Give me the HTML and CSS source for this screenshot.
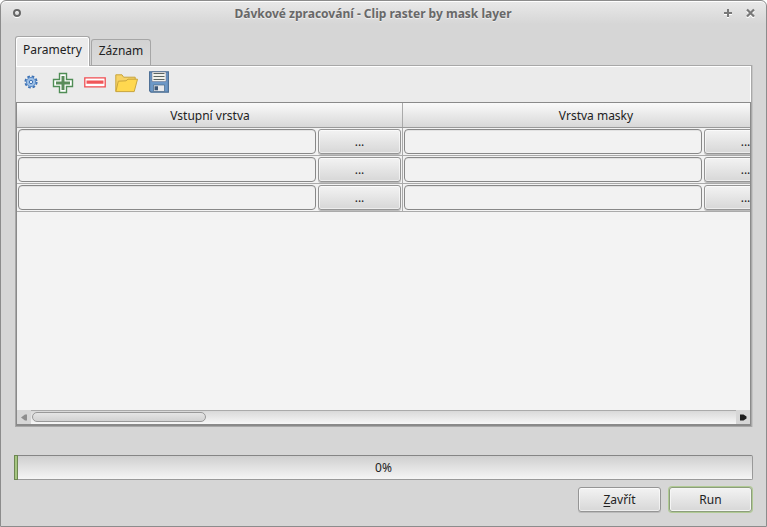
FILE: index.html
```html
<!DOCTYPE html>
<html lang="cs">
<head>
<meta charset="utf-8">
<title>Dávkové zpracování</title>
<link rel="stylesheet" href="styles.css">
</head>
<body>
<main class="window">
  <header class="titlebar">
    <svg class="win-icon" width="10" height="10" viewBox="0 0 10 10"><circle cx="5" cy="6" r="3" fill="none" stroke="#fff" stroke-width="2"/><circle cx="5" cy="5" r="3" fill="none" stroke="#666" stroke-width="2"/></svg>
    <h1 class="title">Dávkové zpracování - Clip raster by mask layer</h1>
    <div class="controls">
      <svg width="8" height="10" viewBox="0 0 8 10"><path d="M0 6h8M4 2v8" stroke="#fff" stroke-width="2"/><path d="M0 5h8M4 1v8" stroke="#787878" stroke-width="2"/></svg>
      <svg width="9" height="10" viewBox="0 0 9 10"><path d="M1 3l7 7M8 3l-7 7" stroke="#fff" stroke-width="2"/><path d="M1 1.5l7 7M8 1.5l-7 7" stroke="#787878" stroke-width="2.2"/></svg>
    </div>
  </header>

  <nav class="tabs">
    <div class="tab tab-active">Parametry</div>
    <div class="tab">Záznam</div>
  </nav>

  <section class="panel">
    <div class="toolbar">
      <svg class="gear" width="14" height="14" viewBox="0 0 14 14"><circle cx="7" cy="7" r="5.6" fill="none" stroke="#3f73b5" stroke-width="2" stroke-dasharray="2.6 1.8"/><circle cx="7" cy="7" r="4.6" fill="#9dbfe5" stroke="#5c8dc8"/><circle cx="7" cy="7" r="1.7" fill="#e4edf7" stroke="#3f73b5"/></svg>
      <svg class="plus" width="22" height="22" viewBox="0 0 22 22"><path d="M7.5 1.5h7v6h6v7h-6v6h-7v-6h-6v-7h6z" fill="#fff" stroke="#4f8d55" stroke-width="1.4"/><path d="M11 4v14M4 11h14" stroke="#5a8c5a" stroke-width="3"/></svg>
      <svg class="minus" width="22" height="11" viewBox="0 0 22 11"><path d="M.8.8h20.4v9H.8z" fill="#fff" stroke="#ef4c50" stroke-width="1.3"/><path d="M2.5 3.5h17v3.2h-17z" fill="#f05659"/></svg>
      <svg class="folder" width="23" height="19" viewBox="0 0 23 19"><path d="M.8 17.5V.8h6.2l1.6 2.4h11.6v4" fill="#f7d366" stroke="#c9a53c"/><path d="M.9 17.6L3.3 7.2l7.7-.4 2-1.6h9.5L19.2 17.6z" fill="#ffd84f" stroke="#c9a53c"/></svg>
      <svg class="floppy" width="20" height="22" viewBox="0 0 20 22"><path d="M.6.8h18.8v20.4H2L.6 19.7z" fill="#6d98c7" stroke="#4f7197" stroke-width="1.2"/><path d="M3 1h14v9.5H3z" fill="#f1f1ec" stroke="#557" stroke-width=".4"/><path d="M4.5 2.5h11M4.5 5.5h11M4.5 8.5h11" stroke="#5c6461"/><path d="M4.5 14h11v6.5h-11z" fill="#e9eaed" stroke="#496987" stroke-width=".7"/><path d="M5.5 15.2H9v4H5.5z" fill="#3b5677"/></svg>
    </div>
    <div class="grid">
      <div class="row head"><div class="cell">Vstupní vrstva</div><div class="cell">Vrstva masky</div></div>
      <div class="row"><div class="cell"><span class="input"></span><span class="button">...</span></div><div class="cell"><span class="input"></span><span class="button">...</span></div></div>
      <div class="row"><div class="cell"><span class="input"></span><span class="button">...</span></div><div class="cell"><span class="input"></span><span class="button">...</span></div></div>
      <div class="row"><div class="cell"><span class="input"></span><span class="button">...</span></div><div class="cell"><span class="input"></span><span class="button">...</span></div></div>
      <div class="scrollbar">
        <span class="arrow"><svg width="7" height="7" viewBox="0 0 7 7"><path d="M0 3.5L4 .5h2v6H4z" fill="#8e8e8e"/></svg></span>
        <span class="track"><span class="thumb"></span></span>
        <span class="arrow"><svg width="7" height="7" viewBox="0 0 7 7"><path d="M0 .5h3.5l3 2v2l-3 2H0z" fill="#1e1e1e"/></svg></span>
      </div>
    </div>
  </section>

  <div class="progress"><span class="chunk"></span>0%</div>
  <footer class="actions">
    <div class="button"><span class="key">Z</span>avřít</div>
    <div class="button default">Run</div>
  </footer>
</main>
</body>
</html>
```
FILE: styles.css
```css
* { box-sizing: border-box; }
body {
  margin: 0;
  background: #fff;
  font: 12px/16px "Noto Sans", "Open Sans", sans-serif;
  color: #222;
}
svg { display: block; flex: none; }
.window {
  width: 767px;
  height: 527px;
  border: 1px solid #8c8c8c;
  border-radius: 6px 6px 0 0;
  background: linear-gradient(#e9e9e9, #d6d6d6 23px);
  box-shadow: inset 0 1px #fff;
  padding: 0 13px;
  overflow: hidden;
}
.titlebar {
  display: flex;
  align-items: flex-start;
  height: 35px;
  padding-top: 7px;
}
.win-icon { margin-left: -2px; }
.title {
  flex: 1;
  margin: -3px 0 0;
  font-size: 12px;
  line-height: 18px;
  font-weight: bold;
  text-align: center;
  color: #686868;
  text-shadow: 0 1px #eee;
}
.controls { display: flex; gap: 14px; margin-right: -2px; }
.tabs {
  display: flex;
  align-items: flex-end;
  height: 29px;
  padding-left: 1px;
}
.tab {
  width: 60px;
  height: 26px;
  border: 1px solid #a6a6a6;
  border-bottom: 0;
  border-radius: 3px 3px 0 0;
  background: linear-gradient(#d2d2d2, #dcdcdc);
  text-align: center;
  line-height: 22px;
}
.tab-active {
  width: 75px;
  height: 30px;
  margin: 0 1px -1px 0;
  background: #ebebeb;
  box-shadow: inset 1px 1px #fff, inset -1px 0 #fff;
  line-height: 26px;
  position: relative;
}
.panel {
  width: 737px;
  height: 362px;
  margin-left: 1px;
  border: 1px solid #a8a8a8;
  background: #ebebeb;
  box-shadow: inset 0 1px #fff, inset -1px 0 #fff, 1px 0 #c4c4c4;
}
.toolbar {
  display: flex;
  align-items: flex-start;
  height: 36px;
  padding: 5px 0 0 8px;
}
.gear { margin: 4px 14px 0 0; }
.plus { margin: 1px 10px 0 0; }
.minus { margin: 6px 9px 0 0; }
.folder { margin: 3px 11px 0 0; }
.grid {
  display: flex;
  flex-direction: column;
  width: 735px;
  height: 324px;
  border: 1px solid #8a8a8a;
  border-bottom-width: 2px;
  background: #f3f3f3;
  overflow: hidden;
}
.row {
  display: flex;
  flex: none;
  height: 28px;
  width: 772px;
  border-bottom: 1px solid #aaa;
}
.cell {
  display: flex;
  gap: 2px;
  width: 386px;
  border-right: 1px solid #aaa;
  padding: 1px 1px 0;
}
.head {
  height: 25px;
  background: linear-gradient(#fafafa, #d8d8d8);
  border-color: #999;
}
.head .cell {
  justify-content: center;
  padding: 5px 0 0 1px;
}
.input {
  width: 298px;
  height: 25px;
  border: 1px solid #888;
  border-radius: 4px;
  background: #f2f2f2;
  box-shadow: inset 0 1px #e2e2e2;
}
.button {
  width: 83px;
  height: 25px;
  border: 1px solid #959595;
  border-radius: 3px;
  background: linear-gradient(#f3f3f3, #d7d7d7);
  box-shadow: inset 0 0 0 1px rgba(255, 255, 255, .55), 0 1px #bbb;
  text-align: center;
  line-height: 24px;
}
.scrollbar {
  display: flex;
  height: 14px;
  margin-top: auto;
}
.arrow {
  display: flex;
  align-items: center;
  justify-content: center;
  width: 14px;
  background: #d7d7d7;
}
.track {
  flex: 1;
  border-top: 1px solid #aaa;
  background: linear-gradient(#d9d9d9, #f7f7f7);
  padding: 1px;
}
.thumb {
  display: block;
  width: 174px;
  height: 10px;
  border: 1px solid #999;
  border-radius: 5px;
  background: linear-gradient(#e5e5e5, #d2d2d2);
}
.progress {
  position: relative;
  width: 739px;
  height: 25px;
  margin-top: 28px;
  border: 1px solid #999;
  border-top-color: #858585;
  border-radius: 2px;
  background: linear-gradient(#cfcfcf, #f5f5f5);
  text-align: center;
  line-height: 23px;
}
.chunk {
  position: absolute;
  left: -1px;
  top: -1px;
  width: 4px;
  height: 25px;
  border: 1px solid #6d8752;
  background: #a5c580;
}
.actions {
  display: flex;
  justify-content: flex-end;
  gap: 8px;
  padding: 7px 1px 0 0;
}
.default {
  border-color: #8d9e7c;
  box-shadow: inset 0 0 0 1px #f5f5f5, 0 0 0 1px #b0ca94;
}
.key { text-decoration: underline; text-underline-offset: 2px; }
```
